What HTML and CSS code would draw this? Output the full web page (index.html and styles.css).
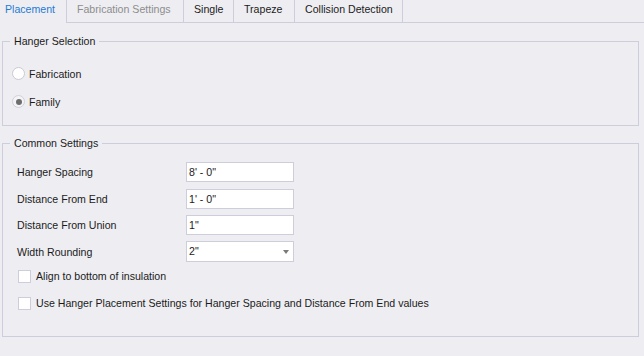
FILE: index.html
```html
<!DOCTYPE html>
<html>
<head>
<meta charset="utf-8">
<link rel="stylesheet" href="styles.css">
</head>
<body>
<div class="tabs">
  <div class="tab active">Placement</div>
  <div class="tab disabled fab">Fabrication Settings</div>
  <div class="tab single">Single</div>
  <div class="tab trap">Trapeze</div>
  <div class="tab coll last">Collision Detection</div>
</div>
<div class="page">
  <fieldset class="group g1">
    <legend>Hanger Selection</legend>
    <div class="g1-body">
      <label class="radio-row"><span class="radio"></span>Fabrication</label>
      <label class="radio-row"><span class="radio checked"></span>Family</label>
    </div>
  </fieldset>
  <fieldset class="group g2">
    <legend>Common Settings</legend>
    <div class="g2-body">
      <div class="fields">
        <div class="field"><span class="flabel">Hanger Spacing</span><span class="input">8' - 0"</span></div>
        <div class="field"><span class="flabel">Distance From End</span><span class="input">1' - 0"</span></div>
        <div class="field"><span class="flabel">Distance From Union</span><span class="input">1"</span></div>
        <div class="field"><span class="flabel">Width Rounding</span><span class="input combo">2"<span class="arrow"></span></span></div>
      </div>
      <label class="check-row first"><span class="check"></span>Align to bottom of insulation</label>
      <label class="check-row"><span class="check"></span>Use Hanger Placement Settings for Hanger Spacing and Distance From End values</label>
    </div>
  </fieldset>
</div>
</body>
</html>
```
FILE: styles.css
```css
html, body {
  margin: 0;
  padding: 0;
  background: #eeeef2;
  font-family: "Liberation Sans", Arial, sans-serif;
  font-size: 10.6px;
  color: #1b1b1b;
}
.tabs {
  display: flex;
  height: 22px;
  border-bottom: 1px solid #cccedb;
}
.tab {
  box-sizing: border-box;
  height: 22px;
  line-height: 18px;
  padding: 0 0 0 10px;
  border-left: 1px solid #cccedb;
  white-space: nowrap;
}
.tab.active {
  width: 66px;
  padding-left: 5px;
  border-left: none;
  color: #1e7bd3;
  height: 23px;
  margin-bottom: -1px;
  background: #eeeef2;
}
.tab.fab { width: 117px; }
.tab.single { width: 50px; }
.tab.trap { width: 61px; }
.tab.coll { width: 109px; }
.tab.last { border-right: 1px solid #cccedb; }
.tab.disabled { color: #8d8d8d; }
.page {
  padding: 11px 5px 0 2px;
}
.group {
  margin: 0;
  padding: 0;
  border: 1px solid #cccedb;
  min-width: 0;
  box-sizing: border-box;
}
.group legend {
  margin-left: 7px;
  padding: 0 4px;
  line-height: 14px;
}
.g1 {
  height: 92px;
}
.g1-body {
  padding: 19px 0 0 9px;
}
.radio-row {
  display: flex;
  align-items: center;
  gap: 4px;
  height: 13px;
  margin-bottom: 15px;
}
.radio {
  box-sizing: border-box;
  width: 13px;
  height: 13px;
  border: 1px solid #c9cad3;
  border-radius: 50%;
  background: #fff;
  position: relative;
}
.radio.checked {
  background: #f4f4f6;
  border-color: #d0d1d8;
}
.radio.checked::after {
  content: "";
  position: absolute;
  left: 2.5px;
  top: 2.5px;
  width: 6px;
  height: 6px;
  border-radius: 50%;
  background: #6e6e6e;
}
.g2 {
  margin-top: 10px;
  height: 201px;
}
.g2-body {
  padding: 12px 0 0 14px;
}
.fields {
  display: flex;
  flex-direction: column;
  gap: 6.5px;
}
.field {
  display: flex;
  align-items: center;
  height: 20px;
}
.flabel {
  width: 169px;
}
.input {
  box-sizing: border-box;
  width: 108px;
  height: 20px;
  border: 1px solid #cccedb;
  background: #fff;
  padding-left: 2px;
  line-height: 18px;
  position: relative;
}
.combo { height: 21px; }
.arrow {
  position: absolute;
  right: 4px;
  top: 8px;
  width: 0;
  height: 0;
  border-left: 3.5px solid transparent;
  border-right: 3.5px solid transparent;
  border-top: 4px solid #7a7a7a;
}
.check-row {
  display: flex;
  align-items: center;
  gap: 5px;
  height: 13px;
  margin-left: 1px;
  margin-top: 14px;
}
.check-row.first { margin-top: 8px; }
.check {
  box-sizing: border-box;
  width: 13px;
  height: 13px;
  border: 1px solid #cccedb;
  background: #fff;
}
```
